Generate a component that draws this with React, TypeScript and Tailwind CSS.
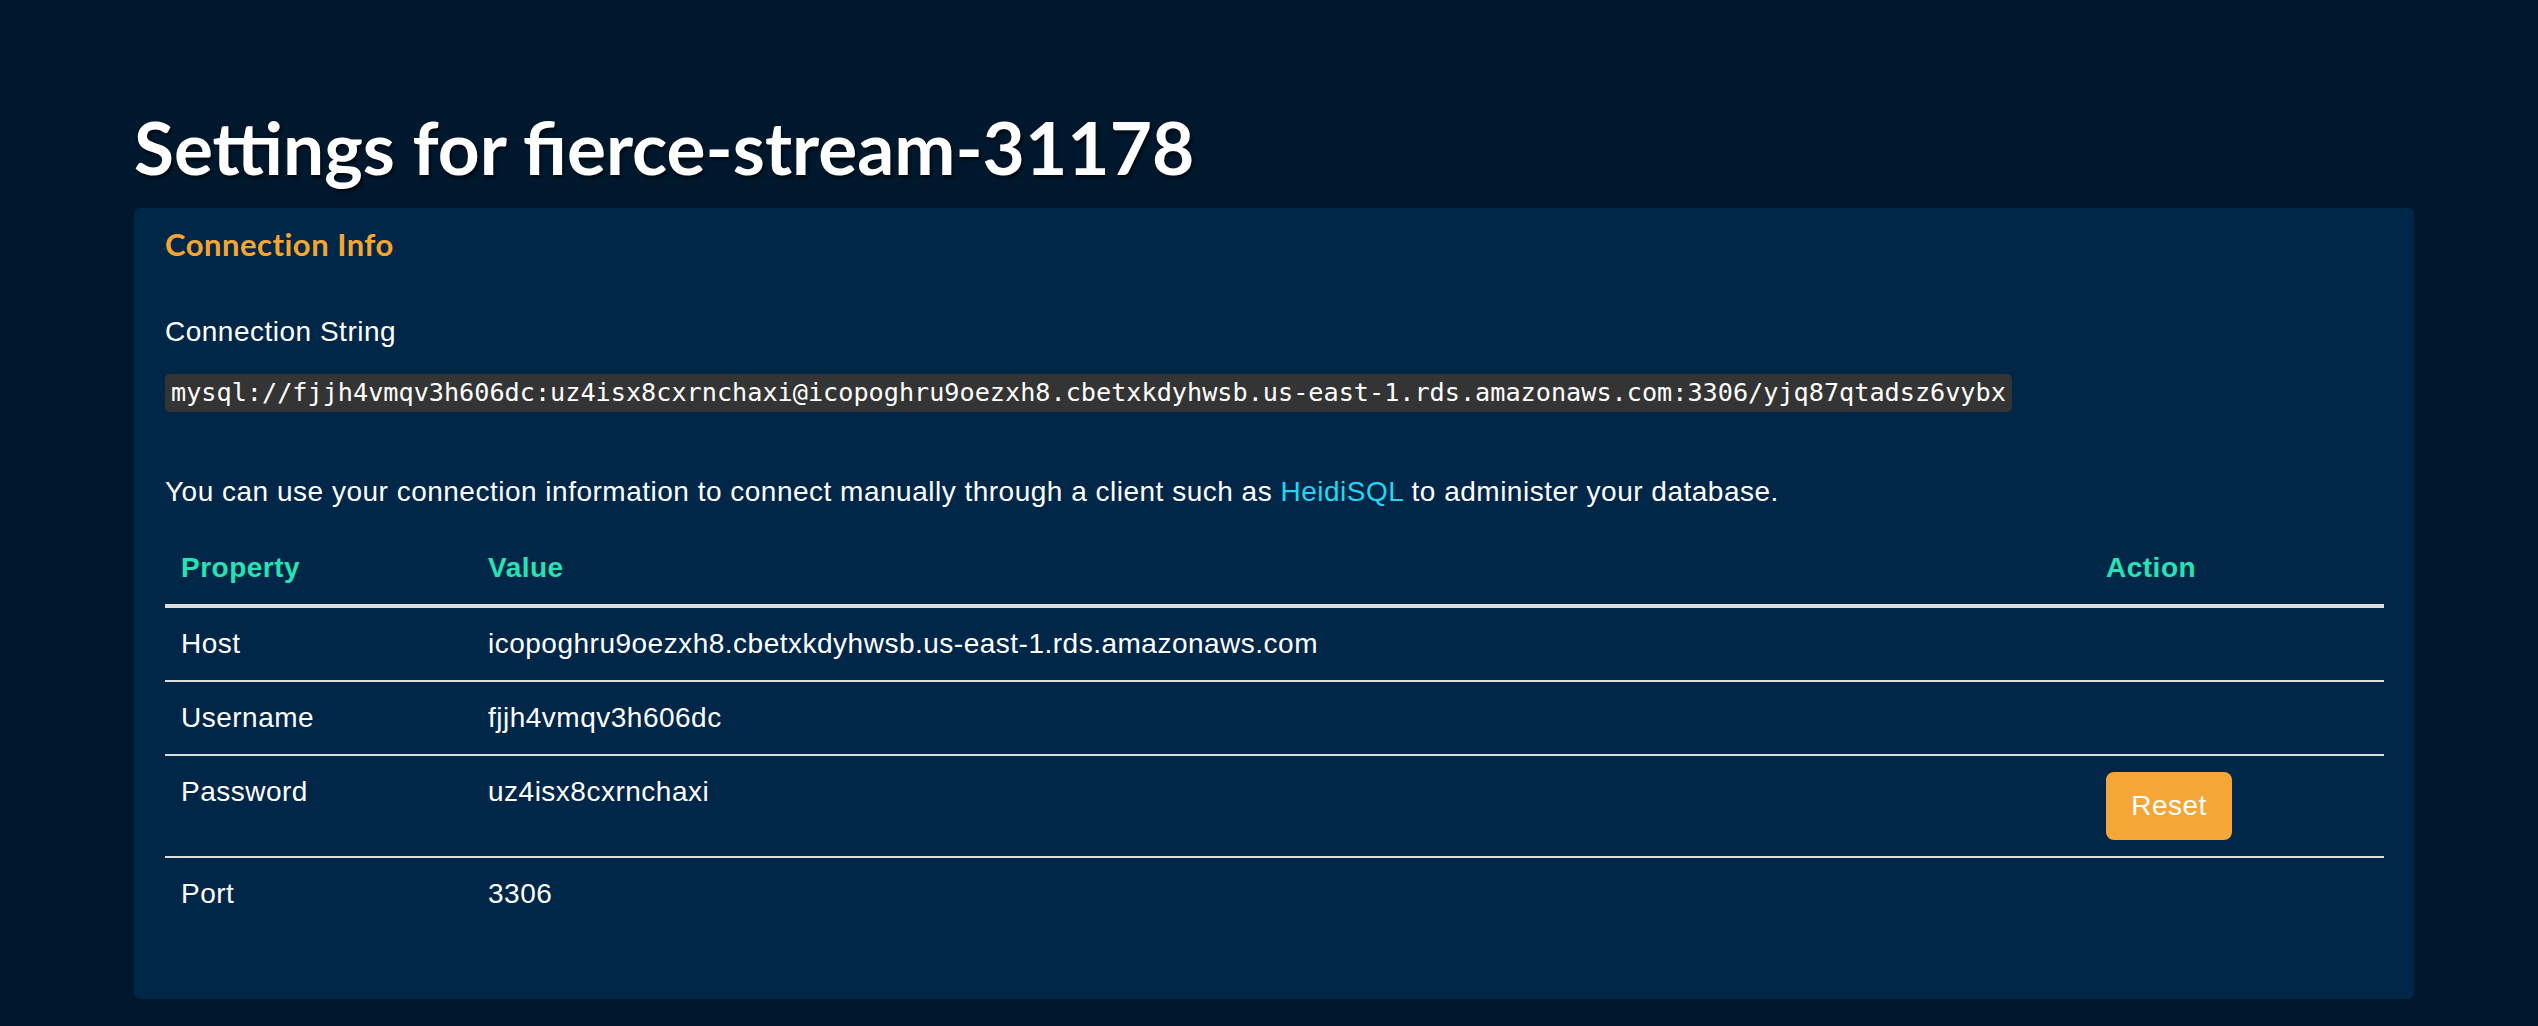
import React from 'react'

const connectionString =
  'mysql://fjjh4vmqv3h606dc:uz4isx8cxrnchaxi@icopoghru9oezxh8.cbetxkdyhwsb.us-east-1.rds.amazonaws.com:3306/yjq87qtadsz6vybx'

const rows = [
  { property: 'Host', value: 'icopoghru9oezxh8.cbetxkdyhwsb.us-east-1.rds.amazonaws.com', action: false },
  { property: 'Username', value: 'fjjh4vmqv3h606dc', action: false },
  { property: 'Password', value: 'uz4isx8cxrnchaxi', action: true },
  { property: 'Port', value: '3306', action: false },
]

export default function App() {
  return (
    <div className="min-h-[1026px] w-full bg-[#00182d] font-['Liberation_Sans',Arial,sans-serif] text-white">
      <div className="w-[2280px] pl-[134px] pt-[108px] box-content">
        <h1 className="mb-[21px] font-['Lato',sans-serif] text-[73px] font-bold leading-[79px] text-white [text-shadow:2px_3px_3px_rgba(0,0,0,0.55)]">
          Settings for fierce-stream-31178
        </h1>

        <section className="rounded-[6px] bg-[#002648] pb-[29px] pl-[31px] pr-[30px] pt-[20px]">
          <h2 className="font-['Lato',sans-serif] text-[31px] font-bold leading-[33px] tracking-[0.5px] text-[#f5a630]">
            Connection Info
          </h2>

          <div className="mt-[51px] text-[28px] leading-[40px] tracking-[0.5px]">Connection String</div>
          <div className="mt-[22px] flex">
            <code className="h-[38px] rounded-[5px] bg-[#343434] px-[6px] font-['DejaVu_Sans_Mono',monospace] text-[25.2px] leading-[38px] text-white">
              {connectionString}
            </code>
          </div>

          <p className="mt-[60px] text-[28px] leading-[40px] tracking-[0.5px]">
            You can use your connection information to connect manually through a client such as{' '}
            <a className="text-[#1fd8f2]">HeidiSQL</a> to administer your database.
          </p>

          <table className="mb-[40px] mt-[20px] w-full table-fixed border-collapse text-left text-[28px] leading-[40px] tracking-[0.5px]">
            <colgroup>
              <col className="w-[307px]" />
              <col />
              <col className="w-[294px]" />
            </colgroup>
            <thead>
              <tr>
                <th className="border-b-4 border-[#dddddd] px-[16px] py-[16px] font-bold text-[#26e3b5]">Property</th>
                <th className="border-b-4 border-[#dddddd] px-[16px] py-[16px] font-bold text-[#26e3b5]">Value</th>
                <th className="border-b-4 border-[#dddddd] px-[16px] py-[16px] font-bold text-[#26e3b5]">Action</th>
              </tr>
            </thead>
            <tbody>
              {rows.map((row, i) => (
                <tr key={row.property} className={i > 0 ? 'border-t-2 border-[#dddddd]' : ''}>
                  <td className="px-[16px] py-[16px] align-top">{row.property}</td>
                  <td className="px-[16px] py-[16px] align-top">{row.value}</td>
                  <td className="px-[16px] py-[16px] align-top">
                    {row.action ? (
                      <button
                        type="button"
                        className="h-[68px] w-[126px] rounded-[8px] bg-[#f4a636] text-[28px] leading-[40px] text-white"
                      >
                        Reset
                      </button>
                    ) : null}
                  </td>
                </tr>
              ))}
            </tbody>
          </table>
        </section>
      </div>
    </div>
  )
}
